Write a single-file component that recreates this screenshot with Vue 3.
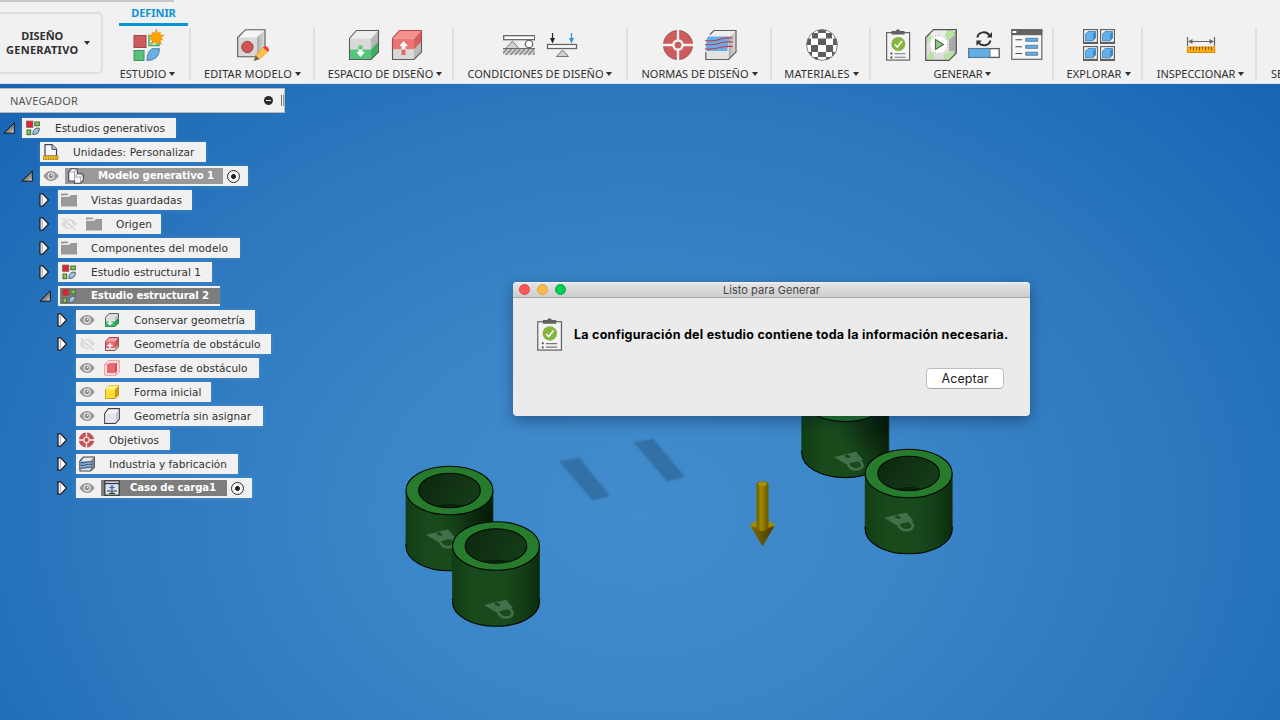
<script setup>
const groups = [
  { id: 'estudio', label: 'ESTUDIO', tw: 46.5, w: 85, pad: 0, icons: ['study'] },
  { id: 'editar', label: 'EDITAR MODELO', tw: 88, w: 124, pad: 1, icons: ['edit'] },
  { id: 'espacio', label: 'ESPACIO DE DISEÑO', tw: 105.5, w: 139, pad: 3, icons: ['preserve', 'obstacle'] },
  { id: 'cond', label: 'CONDICIONES DE DISEÑO', tw: 136, w: 174, pad: 0, icons: ['support', 'load'] },
  { id: 'normas', label: 'NORMAS DE DISEÑO', tw: 107, w: 144, pad: 1, icons: ['target', 'mfg'] },
  { id: 'mat', label: 'MATERIALES', tw: 65.5, w: 99, pad: 2, icons: ['checker'] },
  { id: 'gen', label: 'GENERAR', tw: 49, w: 183, pad: 2, icons: ['clipboard', 'run', 'progress', 'list'] },
  { id: 'exp', label: 'EXPLORAR', tw: 55, w: 89, pad: 2, icons: ['explore'] },
  { id: 'insp', label: 'INSPECCIONAR', tw: 78.5, w: 114, pad: 3, icons: ['measure'] },
]

const rows = [
  { label: 'Estudios generativos', x: 22, w: 154, tw: 110, arrow: 'open', icon: 's-study' },
  { label: 'Unidades: Personalizar', x: 40, w: 166, tw: 121.5, icon: 's-units' },
  { label: 'Modelo generativo 1', x: 40, w: 208, tw: 116, arrow: 'open', eye: 's-eye', icon: 's-comp', sel: 'mid', radio: true },
  { label: 'Vistas guardadas', x: 58, w: 134, tw: 91, arrow: 'closed', icon: 's-folder' },
  { label: 'Origen', x: 58, w: 103, tw: 36, arrow: 'closed', eye: 's-hidden', icon: 's-folder' },
  { label: 'Componentes del modelo', x: 58, w: 182, tw: 137, arrow: 'closed', icon: 's-folder' },
  { label: 'Estudio estructural 1', x: 58, w: 154, tw: 110, arrow: 'closed', icon: 's-study' },
  { label: 'Estudio estructural 2', x: 58, w: 162, tw: 118, arrow: 'open', icon: 's-study', sel: 'full' },
  { label: 'Conservar geometría', x: 76, w: 179, tw: 111, arrow: 'closed', eye: 's-eye', icon: 's-green' },
  { label: 'Geometría de obstáculo', x: 76, w: 195, tw: 126.5, arrow: 'closed', eye: 's-hidden', icon: 's-red' },
  { label: 'Desfase de obstáculo', x: 76, w: 183, tw: 113.5, eye: 's-eye', icon: 's-offset' },
  { label: 'Forma inicial', x: 76, w: 135, tw: 67.5, eye: 's-eye', icon: 's-yellow' },
  { label: 'Geometría sin asignar', x: 76, w: 187, tw: 117, eye: 's-eye', icon: 's-white' },
  { label: 'Objetivos', x: 76, w: 94, tw: 50, arrow: 'closed', icon: 's-target' },
  { label: 'Industria y fabricación', x: 76, w: 162, tw: 118, arrow: 'closed', icon: 's-mfg' },
  { label: 'Caso de carga1', x: 76, w: 176, tw: 86, arrow: 'closed', eye: 's-eye', icon: 's-load', sel: 'dark', radio: true },
]

const cylinders = [
  { x: 449.5, y: 490.5, lx: 426, ly: 534.7 },
  { x: 496, y: 546, lx: 484, ly: 605 },
  { x: 845.3, y: 397.3, lx: 834, ly: 457 },
  { x: 908.7, y: 473.5, lx: 884.3, ly: 517.7 },
]

const star = Array.from({ length: 20 }, (_, i) => {
  const r = i % 2 ? 4.6 : i % 4 ? 7 : 8.6
  const a = (i * Math.PI) / 10 - Math.PI / 2
  return `${(24.3 + r * Math.cos(a)).toFixed(2)},${(8.6 + r * Math.sin(a)).toFixed(2)}`
}).join(' ')

// spreads the letters so that a label takes the given width
const vFit = {
  mounted(el, { value }) {
    const natural = el.getBoundingClientRect().width
    el.style.letterSpacing = `${((value - natural) / el.textContent.length).toFixed(3)}px`
  },
}
</script>

<template>
  <div class="app">
    <svg class="defs" width="0" height="0">
      <defs>
        <linearGradient id="gside" x1="0" x2="1"><stop offset="0" stop-color="#a9a9a9" /><stop offset="1" stop-color="#dedede" /></linearGradient>
        <linearGradient id="gtri" x1="0" x2="1" y1="0" y2="1"><stop offset=".3" stop-color="#444" /><stop offset="1" stop-color="#ddd" /></linearGradient>
        <clipPath id="ball"><circle cx="16" cy="16" r="15.5" /></clipPath>
      </defs>
      <symbol id="study" viewBox="0 0 32 32">
        <rect x="2" y="6.5" width="12" height="12" fill="#cd5c5c" stroke="#a04848" />
        <rect x="2" y="21.5" width="10" height="10" fill="#56c27c" stroke="#4b8d61" />
        <rect x="17" y="7" width="10" height="9.500" fill="#e9f5ec" stroke="#42ad68" stroke-width="1.500" />
        <path d="M18 15l6-6M19 8l7 8" stroke="#42ad68" />
        <path d="M27.500 19.700H20Q15 23 15 31.500Q27 31.500 27.500 19.700Z" fill="#67afe5" stroke="#4c85ad" />
        <polygon :points="star" fill="#ffa200" stroke="#d88700" stroke-width=".5" />
      </symbol>
      <symbol id="edit" viewBox="0 0 32 32">
        <path d="M.7 8.500L8.500 .7H28L20 8.500Z" fill="#f5f5f5" /><path d="M20 8.500L28 .7V20L20 27.500Z" fill="url(#gside)" />
        <path d="M.7 8.500H20V27.700H.7Z" fill="#d9d9d9" />
        <path d="M.7 8.500L8.500 .7H28V20L20 27.700H.7Z" fill="none" stroke="#5a5a5a" stroke-width="1.100" />
        <circle cx="10.400" cy="18" r="5.700" fill="#cd5555" stroke="#994444" />
        <path d="M17 31.500L19 25.500L26.500 18L31 22.500L23.500 29.500Z" fill="#fbc14c" stroke="#d99b2e" stroke-width=".6" />
        <path d="M17 32L18.700 26.300L22.300 29.900Z" fill="#666" /><path d="M26 18.500C27.500 15.500 33.500 18 31.500 23Z" fill="#fb3434" />
      </symbol>
      <symbol id="preserve" viewBox="0 0 32 32">
        <path d="M1.500 9.500L8.500 1.500H30.500L23 9.500Z" fill="#ededed" /><path d="M1.500 9.500H23V21H1.500Z" fill="#d9d9d9" /><path d="M23 9.500L30.500 1.500V13L23 21Z" fill="#b7b7b7" />
        <path d="M1.500 20.500H23V30.500H1.500Z" fill="#55c57c" /><path d="M23 20.500L30.500 12.500V23L23 30.500Z" fill="#3fae65" />
        <path d="M1.500 9.500L8.500 1.500H30.500V23L23 30.500H1.500Z" fill="none" stroke="#5d5d5d" stroke-width="1.100" />
        <path d="M10.500 16.500h4v4h-4Z" fill="#55c57c" /><path d="M10.500 20.500h4v2.500h2.500L12.500 28L8.500 23h2Z" fill="#fff" />
      </symbol>
      <symbol id="obstacle" viewBox="0 0 32 32">
        <path d="M1.500 9.500L8.500 1.500H30.500L23 9.500Z" fill="#f39090" /><path d="M1.500 9.500H23V20.500H1.500Z" fill="#e97676" /><path d="M23 9.500L30.500 1.500V13L23 20.500Z" fill="#d35f5f" />
        <path d="M1.500 20.500H23V30.500H1.500Z" fill="#d9d9d9" /><path d="M23 20.500L30.500 12.500V23L23 30.500Z" fill="#bbb" />
        <path d="M1.500 20V9.500L8.500 1.500H30.500V13" fill="none" stroke="#b44848" stroke-width="1.100" />
        <path d="M30.500 13V23L23 30.500H1.500V20" fill="none" stroke="#5d5d5d" stroke-width="1.100" />
        <path d="M10.500 20h4v6h-4Z" fill="#e36767" /><path d="M10.500 20.500h4v-3.500h2.500L12.500 12L8.500 17h2Z" fill="#fff" />
      </symbol>
      <symbol id="support" viewBox="0 0 32 32">
        <rect x=".7" y="6.700" width="31" height="4" fill="#fff" stroke="#666" stroke-width="1.300" />
        <path d="M2.500 19.500L9.500 12L16 19.500Z" fill="#d2d2d2" stroke="#7d7d7d" /><circle cx="26" cy="15" r="3.700" fill="#fff" stroke="#666" stroke-width="1.200" />
        <rect x="0" y="19.500" width="32" height="6" fill="#ccc" /><path d="M0 19.500H32" stroke="#666" />
        <path d="M0 24L4 20M3 26L8.500 20M7.500 26L13 20M12 26L17.500 20M16.500 26L22 20M21 26L26.500 20M25.500 26L31 20M30 26L32 23.500" stroke="#828282" stroke-width="1.200" />
      </symbol>
      <symbol id="load" viewBox="0 0 32 32">
        <path d="M6.500 4V11" stroke="#222" stroke-width="1.200" /><path d="M4 9H9L6.500 14.500Z" fill="#222" />
        <path d="M25.500 4V11" stroke="#2591e8" stroke-width="1.200" /><path d="M23 9H28L25.500 14.500Z" fill="#2591e8" />
        <rect x="1.500" y="15.500" width="29" height="4" fill="#fff" stroke="#666" stroke-width="1.300" />
        <path d="M10.500 27.500L16.500 21L22.500 27.500Z" fill="#d0d0d0" stroke="#777" />
      </symbol>
      <symbol id="target" viewBox="0 0 32 32">
        <circle cx="16" cy="16" r="14.600" fill="#cd5c5c" stroke="#aa4b4b" />
        <path d="M16 0V32M0 16H32" stroke="#f1f1f1" stroke-width="2.400" />
        <circle cx="16" cy="16" r="4.600" fill="#cd5c5c" stroke="#f1f1f1" stroke-width="2.500" />
      </symbol>
      <symbol id="mfg" viewBox="0 0 32 32">
        <path d="M1.500 9L9 1.500H31L23.500 9Z" fill="#eee" /><path d="M23.500 9L31 1.500V23L23.500 30.500Z" fill="url(#gside)" /><path d="M1 9H23.500V30.500H1Z" fill="#e3e3e3" />
        <path d="M5 5.500L9 1.500H31V23L23.500 30.500H.8V23" fill="none" stroke="#606060" stroke-width="1.200" />
        <path d="M3 7.500H25.500Q22 14 22.500 22H1.500Q-.5 15 3 7.500Z" fill="#64aee8" />
        <path d="M0 11.500Q10 13 17 9.500Q22 8 28 9M0 15.500Q10 16.500 17 13.500Q22 12.500 28 13M0 20Q10 20.500 17 18Q22 17 28 17.500" fill="none" stroke="#c83c46" stroke-width="1.200" />
      </symbol>
      <symbol id="checker" viewBox="0 0 32 32">
        <g clip-path="url(#ball)"><rect width="32" height="32" fill="#fff" />
          <path d="M12 0h8v4h-8ZM6 4h6v5.500H6ZM20 4h6v5.500h-6ZM0 9.500h5v6.500H0ZM12 9.500h8V16h-8ZM27 9.500h5V16h-5ZM5 16h7v7H5ZM20 16h7v7h-7ZM12 23h8v5h-8ZM2 23h4v4H2ZM26 23h4v4h-4ZM6 28h6v4H6ZM20 28h6v4h-6Z" fill="#5e5e5e" /></g>
        <circle cx="16" cy="16" r="15.400" fill="none" stroke="#777" stroke-width=".9" />
      </symbol>
      <symbol id="clipboard" viewBox="0 0 32 32">
        <rect x="4.600" y="3.600" width="23" height="27.500" fill="#f4f4f4" stroke="#646464" stroke-width="1.200" />
        <path d="M9.500 2H13.500Q16 -1.500 18.500 2H22.500V5.500H9.500Z" fill="#616161" />
        <circle cx="16.300" cy="15" r="7" fill="#86b440" /><path d="M12.800 15.500L15.300 18L20 12" fill="none" stroke="#fff" stroke-width="1.500" />
        <path d="M8.500 24.500h1.800M8.500 28.500h1.800" stroke="#444" stroke-width="1.800" /><path d="M12.500 24.800H23.500M12.500 28.300H23.500" stroke="#777" stroke-width="1.100" />
      </symbol>
      <symbol id="run" viewBox="0 0 32 32">
        <path d="M.7 8.500L8.500 .7H31.300L24 8.500Z" fill="#ededed" /><path d="M.7 8.500H24V31.300H.7Z" fill="#ddd" /><path d="M24 8.500L31.300 .7V24L24 31.300Z" fill="#aaa" />
        <path d="M2 6L5 5L9 10L5 14H1ZM20 6L22 1H28L30 6L25 10H21ZM2 26L6 22L9 26L9 31H2ZM19 26L24 22L29 22V26L24 31H19Z" fill="#b7e3a4" />
        <path d="M.7 8.500L8.500 .7H31.300V24L24 31.300H.7Z" fill="none" stroke="#555" stroke-width="1.200" />
        <circle cx="13.700" cy="15.500" r="9.800" fill="#fff" /><circle cx="13.700" cy="15.500" r="9" fill="none" stroke="#7b8b75" stroke-width=".8" stroke-dasharray="1.200 1.200" />
        <path d="M10.500 10.500V20.500L18.500 15.500Z" fill="#90cc88" stroke="#536c50" stroke-width="1.200" />
      </symbol>
      <symbol id="progress" viewBox="0 0 32 32">
        <rect x=".7" y="19.600" width="30.500" height="8.800" fill="#fff" stroke="#595959" stroke-width="1.300" /><path d="M.7 19.600H22V28.400H.7Z" fill="#65ade2" stroke="#557c9b" />
        <path d="M9.300 8.500C10.500 2.500 18.500 1.500 21.500 6.500M22.500 11.500C21 17 14 18 10.500 13.500" fill="none" stroke="#333" stroke-width="2" />
        <path d="M18.800 8.500H24V3ZM8.400 16.800V11.500H13.800Z" fill="#333" />
      </symbol>
      <symbol id="list" viewBox="0 0 32 32">
        <rect x=".8" y=".8" width="30" height="29.500" fill="#f8f8f8" stroke="#666" stroke-width="1.200" /><rect x=".5" y=".2" width="30.800" height="6" fill="#636363" /><rect x="1.500" y="2" width="3.800" height="2" fill="#fff" />
        <path d="M4.500 10.700H11M4.500 17.700H11M4.500 24.500H11" stroke="#444" stroke-width="1.100" />
        <path d="M14.700 9.300h12v3h-12ZM14.700 16.300h12v3h-12ZM14.700 23.200h12v3h-12Z" fill="#66aee5" stroke="#587f9f" />
      </symbol>
      <symbol id="cell" viewBox="0 0 15 15">
        <rect x=".6" y=".6" width="13.800" height="13.800" fill="#fafafa" stroke="#626262" stroke-width="1.200" /><path d="M0 13.800H15" stroke="#606060" stroke-width="2" />
        <path d="M2.500 5L5 2.500H12.500V9L10 11.700H2.500Z" fill="#62b1ec" stroke="#3780b9" stroke-width=".8" /><path d="M10 5L12.500 2.500V9L10 11.700Z" fill="#3f88c4" />
      </symbol>
      <symbol id="explore" viewBox="0 0 32 32">
        <use href="#cell" x="0" y="0" width="15" height="15" /><use href="#cell" x="17" y="0" width="15" height="15" />
        <use href="#cell" x="0" y="17" width="15" height="15" /><use href="#cell" x="17" y="17" width="15" height="15" />
      </symbol>
      <symbol id="measure" viewBox="0 0 32 32">
        <path d="M2.500 8V17M29.500 8V17M4 12.500H28" stroke="#666" stroke-width="1.200" /><path d="M3 12.500L7.500 10V15ZM29 12.500L24.500 10V15Z" fill="#666" />
        <rect x="2.400" y="18" width="27.300" height="5.500" fill="#ffae0c" stroke="#db8a05" />
        <path d="M5.500 18v2.500M8.500 18v3.500M11.500 18v2.500M14.500 18v3.500M17.500 18v2.500M20.500 18v3.500M23.500 18v2.500M26.500 18v3.500" stroke="#7a5814" />
      </symbol>

      <symbol id="s-study" viewBox="0 0 16 16">
        <rect x="1.700" y="1.200" width="6" height="6" fill="#e3222c" stroke="#8b4b4b" /><rect x="9.800" y="2" width="4.500" height="3.700" fill="#80cc4d" stroke="#4a663d" />
        <rect x="2" y="10" width="3.700" height="4.700" fill="#80cc4d" stroke="#4a663d" /><path d="M14.300 8.200H11Q7.500 10 7.800 14.500Q14.500 14.700 14.300 8.200Z" fill="#9ec2e6" stroke="#52606d" />
      </symbol>
      <symbol id="s-units" viewBox="0 0 16 16">
        <path d="M2 12V.700H9L13.500 5.300V12Z" fill="#f5f7fb" stroke="#3d434d" stroke-width="1.200" /><path d="M9 .7V5.300H13.500" fill="#cfd6df" stroke="#3d434d" />
        <rect x=".6" y="12" width="14.300" height="3.300" fill="#ffd426" stroke="#bd8419" /><path d="M3 13v2M5.500 13v2M8 13v2M10.500 13v2M13 13v2" stroke="#9a6b12" stroke-width=".7" />
      </symbol>
      <symbol id="s-comp" viewBox="0 0 16 16">
        <path d="M.7 4L3.300 .8H9L9.500 6L13.500 5.500L15.300 7V12L12.500 15.200H6.500V13H.7Z" fill="#fbfbfb" stroke="#414750" stroke-width="1.100" /><path d="M1 4H6.500L9 1M6.500 4V8.500L9.500 6M6.500 9H12.500L15 7M12.500 9V15M6.500 9V13" fill="none" stroke="#8b929b" stroke-width=".8" />
      </symbol>
      <symbol id="s-folder" viewBox="0 0 16 16"><path d="M0 1.500H6.500L7.700 3L0 3.800ZM0 5L8 4.700L10 3H16V14.500H0Z" fill="#999" /></symbol>
      <symbol id="s-green" viewBox="0 0 16 16"><path d="M1.500 5.500L5 1.500H14.500V11L11 14.500H1.500Z" fill="#ddd" /><path d="M1.500 9.500H11L14.500 5.500V11L11 14.500H1.500Z" fill="#39b86a" /><path d="M11 5.500L14.500 1.500V11L11 14.500Z" opacity=".15" /><path d="M1.500 9V5.500L5 1.500H14.500V6" fill="none" stroke="#626262" /><path d="M14.500 6V11L11 14.500H1.500V9" fill="none" stroke="#2f8a52" /><path d="M6 8.700V13.500M3.500 11.200H8.500" stroke="#fff" stroke-width="1.500" /></symbol>
      <symbol id="s-red" viewBox="0 0 16 16"><path d="M1.500 5.500L5 1.500H14.500V11L11 14.500H1.500Z" fill="#e86a70" /><path d="M1.500 12H11L14.500 8.500V11L11 14.500H1.500Z" fill="#ddd" /><path d="M1.500 5.500L5 1.500H14.500L11 5.500Z" fill="#f9a2a4" /><path d="M11 5.500L14.500 1.500V11L11 14.500Z" opacity=".15" /><path d="M1.500 5.500L5 1.500H14.500V11L11 14.500H1.500Z" fill="none" stroke="#9d4b4e" /><path d="M6 7V11.800M3.500 9.400H8.500" stroke="#fff" stroke-width="1.500" /></symbol>
      <symbol id="s-offset" viewBox="0 0 16 16"><path d="M.7 4.500L4 .7H15.300V12L12 15.300H.7Z" fill="#fce4e4" stroke="#ec9999" /><path d="M.7 4.500H12V15.300M12 4.500L15.300 .7" fill="none" stroke="#ec9999" /><path d="M3 5L5 3H13V11L11 13H3Z" fill="#e56a6f" /><path d="M11 5L13 3V11L11 13Z" fill="#c95056" /></symbol>
      <symbol id="s-yellow" viewBox="0 0 16 16"><path d="M1.500 5.500L5 1.500H14.500V11L11 14.500H1.500Z" fill="#ffdf34" stroke="#c09c20" /><path d="M11 5.500L14.500 1.500V11L11 14.500Z" fill="#c79a12" /><path d="M1.500 5.500L5 1.500H14.500L11 5.500Z" fill="#ffef81" /></symbol>
      <symbol id="s-white" viewBox="0 0 16 16"><path d="M.7 5.500L4.500 .7H15.300V11L11.500 15.300H.7Z" fill="#f9f9fb" stroke="#3e444c" stroke-width="1.200" /><path d="M11.500 5.500L14.700 1.500V10.800L11.500 14.700Z" fill="#c7c9d2" /><path d="M1.500 5.500H11.500V14.500H1.500Z" fill="#e3e4e9" /></symbol>
      <symbol id="s-target" viewBox="0 0 16 16"><circle cx="7.500" cy="8" r="7.200" fill="#cd5055" stroke="#9e4448" stroke-width=".7" /><path d="M7.500 0V16M0 8H16" stroke="#f1f1f1" stroke-width="1.300" /><circle cx="7.500" cy="8" r="2.700" fill="#cd5055" stroke="#f1f1f1" stroke-width="1.100" /></symbol>
      <symbol id="s-mfg" viewBox="0 0 16 16"><path d="M1 5L4.500 1H15.300V11.500L11.500 15H1Z" fill="#e5e7ea" stroke="#414850" stroke-width="1.200" /><path d="M11.500 5L15 1.500V11L11.500 14.500Z" fill="#7b8590" /><path d="M1 5H12V12.500H1Z" fill="#8cb5e0" /><path d="M0 6.500Q4 7.500 8 6Q10 5.500 13 6M0 9Q4 10 8 8.500Q10 8 13 8.500M0 11.700Q4 12.700 8 11.200Q10 10.700 13 11.200" fill="none" stroke="#44566c" stroke-width="1.100" /></symbol>
      <symbol id="s-load" viewBox="0 0 16 16"><rect x=".8" y=".8" width="14.400" height="14.400" fill="#dde4ed" stroke="#2e3338" stroke-width="1.200" /><path d="M1 3.500H15" stroke="#2e3338" stroke-width="1.300" /><path d="M8 5V10M5.500 7.500H10.500" stroke="#2b67c6" stroke-width="1.300" /><path d="M3 11H13M8 10.500V14M5 13.500H11" stroke="#333" stroke-width="1.200" /></symbol>
      <symbol id="s-eye" viewBox="0 0 16 16"><path d="M.3 8Q3.500 3 8 3T15.700 8Q12.500 13 8 13T.3 8Z" fill="#999" /><circle cx="8" cy="8" r="3.400" fill="#f1f1f1" /><circle cx="8" cy="8" r="2.400" fill="#8e8e8e" /><circle cx="8.500" cy="7.300" r=".8" fill="#f1f1f1" /></symbol>
      <symbol id="s-hidden" viewBox="0 0 16 16"><path d="M.3 8Q3.500 3 8 3T15.700 8Q12.500 13 8 13T.3 8Z" fill="#d9d9d9" /><circle cx="8" cy="8" r="3.400" fill="#f1f1f1" /><circle cx="8" cy="8" r="2" fill="#d9d9d9" /><path d="M2 2L15 13.500" stroke="#f1f1f1" stroke-width="3" /><path d="M2 2.500L14.500 14" stroke="#d4d4d4" stroke-width="1.200" /></symbol>
      <symbol id="open" viewBox="0 0 12 12"><path d="M.8 11.200H11.300V.8Z" fill="url(#gtri)" stroke="#141414" /></symbol>
      <symbol id="closed" viewBox="0 0 12 14"><path d="M1 .8H3.800L9.500 7L3.800 13.200H1Z" fill="#fff" stroke="#1a1a1a" stroke-width="1.200" /><path d="M3.200 1V13" stroke="#777" stroke-width=".7" /></symbol>
    </svg>

    <header class="toolbar">
      <span class="strip"></span>
      <div class="workspace">
        <div class="names"><b v-fit="42">DISEÑO</b><b v-fit="72.5">GENERATIVO</b></div>
        <i class="caret"></i>
      </div>
      <div class="ribbon">
        <div class="tab"><b v-fit="44.5">DEFINIR</b></div>
        <div class="groups">
          <div v-for="g in groups" :key="g.id" class="group" :style="{ width: g.w + 'px', paddingLeft: g.pad + 'px' }">
            <div class="icons"><svg v-for="i in g.icons" :key="i" width="32" height="32"><use :href="'#' + i" /></svg></div>
            <div class="glabel"><span v-fit="g.tw">{{ g.label }}</span><i class="caret"></i></div>
          </div>
          <div class="group cut"><div class="glabel"><span>SE</span></div></div>
        </div>
      </div>
    </header>

    <main class="canvas">
      <svg class="scene" width="1280" height="636" viewBox="0 84 1280 636">
        <defs>
          <linearGradient id="wall" x1="0" x2="1"><stop offset="0" stop-color="#123d15" /><stop offset=".25" stop-color="#184a1b" /><stop offset=".6" stop-color="#184a1b" /><stop offset=".85" stop-color="#123b15" /><stop offset="1" stop-color="#0c2a0e" /></linearGradient>
          <linearGradient id="hole" x1="0" x2="1" y1="0" y2=".3"><stop offset="0" stop-color="#0b280d" /><stop offset=".6" stop-color="#113314" /><stop offset="1" stop-color="#143b17" /></linearGradient>
          <linearGradient id="shaft" x1="0" x2="1"><stop offset="0" stop-color="#6f5e00" /><stop offset=".4" stop-color="#a08800" /><stop offset="1" stop-color="#665600" /></linearGradient>
          <linearGradient id="cone" x1="0" x2="1"><stop offset="0" stop-color="#7f6a00" /><stop offset="1" stop-color="#453900" /></linearGradient>
          <radialGradient id="shade" cx="1" cy=".3" r=".6"><stop offset="0" stop-color="#041506" stop-opacity=".8" /><stop offset="1" stop-color="#041506" stop-opacity="0" /></radialGradient>
          <filter id="soft"><feGaussianBlur stdDeviation="1.300" /></filter>
        </defs>
        <g fill="#316fa6" filter="url(#soft)">
          <path d="M559 461.500L579 457.500L610 496L593 500.500Z" /><path d="M634 442.500L653 438.500L685 477L667 481.500Z" />
        </g>
        <g v-for="(c, n) in cylinders" :key="n">
          <g :transform="`translate(${c.x} ${c.y})`">
            <path d="M-43.500 0V56A43.500 24.300 0 0 0 43.500 56V0Z" fill="url(#wall)" />
            <path v-if="n % 2 === 0" d="M-43.500 0V56A43.500 24.300 0 0 0 43.500 56V0Z" fill="url(#shade)" />
            <path d="M-43.500 0V56M43.500 0V56" stroke="#0d3511" stroke-width=".7" />
            <path d="M-43.500 53V56A43.500 24.300 0 0 0 43.500 56V53" fill="none" stroke="#020802" stroke-width="1.100" />
            <ellipse rx="43.500" ry="24.300" fill="#267b2d" stroke="#020802" stroke-width="1.100" />
            <ellipse rx="30.800" ry="17.300" fill="url(#hole)" stroke="#020802" stroke-width="1.100" />
            <path d="M-12 15.700Q0 12.500 12 15.700M-8 16.500Q0 14.700 8 16.500" fill="none" stroke="#031004" stroke-width=".8" />
          </g>
          <g :transform="`translate(${c.lx} ${c.ly})`">
            <path d="M13.500 6C15 10 18 12.500 22 12.500C27 12.500 29.500 9.500 28 6.500C27 4.500 24.500 2.500 22 3.500" fill="none" stroke="#41704a" stroke-width="2.600" />
            <path d="M0 0L22 -5.300L29 2.700L12 7.200Z" fill="#41704a" />
            <path d="M16.500 6.700L24 4.800Q26.500 6.500 26 8.500Q25.500 10.500 22 10.300Q18.500 10 16.500 6.700Z" fill="#184a1b" />
            <path d="M10.500 -1.500Q13 -3.500 14.500 -1.500L16.500 -1L15.500 1.200L13.500 .8Q11 1 10.500 -1.500Z" fill="#184a1b" />
          </g>
        </g>
        <ellipse cx="762.500" cy="526" rx="12" ry="5.500" fill="#a08a00" />
        <path d="M750.500 526Q762 531 774.500 526L763 545.500H762Z" fill="url(#cone)" />
        <path d="M756.500 484Q757 481.300 762.500 481.300T768.500 484V529Q762 533 756.500 529Z" fill="url(#shaft)" />
        <ellipse cx="762.500" cy="484" rx="4.500" ry="1.800" fill="#ab940a" />
      </svg>

      <aside class="browser">
        <div class="bhead"><span v-fit="68">NAVEGADOR</span><i class="minus"></i><i class="grip"></i></div>
        <div v-for="r in rows" :key="r.label" class="row" :style="{ paddingLeft: r.x - 20 + 'px' }">
          <span class="exp"><svg v-if="r.arrow" width="12" :height="r.arrow === 'open' ? 12 : 14"><use :href="'#' + r.arrow" /></svg></span>
          <div class="box" :class="r.sel" :style="{ width: r.w + 'px' }">
            <svg v-if="r.eye" class="eye" width="16" height="16"><use :href="'#' + r.eye" /></svg>
            <div class="body">
              <svg width="16" height="16"><use :href="'#' + r.icon" /></svg>
              <span v-fit="r.tw" class="text">{{ r.label }}</span>
            </div>
            <i v-if="r.radio" class="radio"></i>
          </div>
        </div>
      </aside>

      <section class="dialog">
        <div class="title"><i class="dot red"></i><i class="dot amber"></i><i class="dot green"></i><span v-fit="97">Listo para Generar</span></div>
        <div class="message">
          <svg width="33" height="33"><use href="#clipboard" width="33" height="33" /></svg>
          <b v-fit="434.500">La configuración del estudio contiene toda la información necesaria.</b>
        </div>
        <button><span v-fit="47">Aceptar</span></button>
      </section>
    </main>
  </div>
</template>

<style>
body { overflow: hidden; }
</style>
<style scoped>
.app { width: 1280px; height: 720px; overflow: hidden; display: flex; flex-direction: column; font: 11px "Noto Sans", sans-serif; color: #303030; }
.app * { box-sizing: border-box; }
.defs { position: absolute; }
svg { display: block; flex: none; }
span, b { white-space: nowrap; }
.toolbar { position: relative; height: 84px; flex: none; background: #f1f1f1; display: flex; border-bottom: 1px solid #dfe3e8; }
.strip { position: absolute; left: 0; top: 0; width: 174px; height: 2px; background: #c9c9c9; }
.workspace { width: 107px; height: 62px; margin: 12px 0 0 -4px; border: 2px solid #dedede; border-radius: 5px; display: flex; align-items: center; padding: 0 0 1px 8px; gap: 5px; flex: none; }
.names { display: flex; flex-direction: column; align-items: center; line-height: 14px; font-size: 11px; }
.caret { width: 0; height: 0; border: 3px solid transparent; border-top: 4.500px solid #303030; border-bottom: 0; flex: none; }
.ribbon { flex: none; margin-left: 3px; }
.tab { width: 69px; height: 26px; margin-left: 13px; border-bottom: 3px solid #0696d7; color: #0a93d6; text-align: center; line-height: 26px; font-size: 11px; }
.groups { display: flex; padding-top: 2px; }
.group { height: 52px; flex: none; border-right: 2px solid #dedede; display: flex; flex-direction: column; align-items: center; }
.icons { display: flex; gap: 11px; padding-top: 1px; }
.glabel { display: flex; align-items: center; gap: 3px; height: 16px; margin-top: 5px; font-size: 11px; }
.cut { width: 26px; border: 0; padding: 33px 0 0 14px; align-items: flex-start; }
.canvas { position: relative; height: 636px; background: radial-gradient(ellipse 920px 690px at 640px 430px, #428ccc 0%, #3b86c8 28%, #2d78be 58%, #1f6cb8 80%, #1460b0 100%); }
.scene { position: absolute; left: 0; top: 0; }
.browser { position: relative; width: 290px; padding-top: 4px; }
.bhead { width: 285px; height: 25px; margin-bottom: 5px; background: #f1f1f1; border: solid #b9b9b9; border-width: 1px 1px 1px 0; display: flex; align-items: center; padding: 0 0 1px 10px; color: #555; font-size: 11px; }
.minus { width: 9px; height: 9px; border-radius: 50%; background: linear-gradient(#eee, #eee) center / 5px 1px no-repeat #2d2d2d; margin-left: auto; margin-right: 8px; }
.grip { width: 3px; height: 11px; border-left: 1px solid #777; border-right: 1px solid #999; }
.row { display: flex; align-items: center; height: 20px; margin-bottom: 4px; }
.exp { width: 20px; padding-left: 1px; flex: none; }
.box { height: 20px; background: #f1f1f1; display: flex; align-items: center; flex: none; box-shadow: 0 0 4px rgba(130, 185, 230, .28); }
.eye { margin: 0 6px 0 3px; }
.body { display: flex; align-items: center; height: 16px; padding-left: 3px; gap: 14px; flex: 1; }
.text { font: 10.500px/16px "DejaVu Sans", sans-serif; }
.mid .body, .full .body, .dark .body { color: #fff; }
.mid .text, .full .text, .dark .text { font-weight: 700; font-size: 10.200px; }
.mid .body { background: #999; }
.dark .body { background: #7d7d7d; gap: 10px; }
.full .body { background: #7d7d7d; margin-left: 2px; padding-left: 1px; }
.radio { width: 13px; height: 13px; margin: 0 8px 0 4px; border: 1.500px solid #2b2b2b; border-radius: 50%; background: radial-gradient(circle, #222 2.100px, #f5f5f5 2.700px); flex: none; }
.dialog { position: absolute; left: 513px; top: 198px; width: 517px; height: 134px; background: #ebebeb; border-radius: 4px; box-shadow: 0 5px 14px rgba(0, 20, 50, .38); display: flex; flex-direction: column; color: #000; }
.title { height: 16px; flex: none; border-radius: 4px 4px 0 0; background: linear-gradient(#f3f3f3 0, #e1e1e1 2px, #cecece 100%); border-bottom: 1px solid #a9a9a9; display: flex; align-items: center; padding-left: 6px; gap: 7px; font: 11px Inter, sans-serif; color: #454545; }
.title span { margin-left: 150px; padding-top: 1px; }
.dot { width: 11px; height: 11px; border-radius: 50%; border: 1px solid; }
.red { background: #ff565b; border-color: #e2454a; }
.amber { background: #fdbb4b; border-color: #dfa23b; }
.green { background: #00cd53; border-color: #00ab41; }
.message { display: flex; align-items: center; height: 34px; margin: 19px 0 0 20px; gap: 8px; font: 12.500px Inter, sans-serif; }
button { align-self: flex-end; margin: 17px 26px 0 0; width: 78px; height: 21px; border: 1px solid #bdbdbd; border-bottom-color: #a6a6a6; border-radius: 4.500px; background: #fff; padding: 0; font: 12.500px/18px Inter, sans-serif; color: #222; }
</style>
